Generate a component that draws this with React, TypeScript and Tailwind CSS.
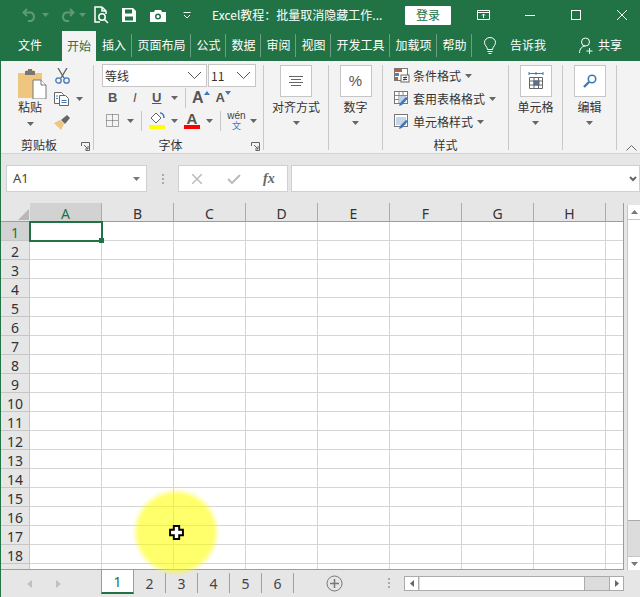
import type { ReactNode } from 'react';

const CJK = { fontFamily: '"Noto Sans CJK SC", "Noto Sans", sans-serif' };
const TABS = [
  { label: '插入', w: 'w-[36px]' },
  { label: '页面布局', w: 'w-[59px]' },
  { label: '公式', w: 'w-[35px]' },
  { label: '数据', w: 'w-[35px]' },
  { label: '审阅', w: 'w-[35px]' },
  { label: '视图', w: 'w-[35px]' },
  { label: '开发工具', w: 'w-[59px]' },
  { label: '加载项', w: 'w-[47px]' },
  { label: '帮助', w: 'w-[35px]' },
];
const COLS = ['B', 'C', 'D', 'E', 'F', 'G', 'H'];
const ROWS = Array.from({ length: 18 }, (_, i) => i + 1);

function Caret({ className = '' }: { className?: string }) {
  return (
    <svg width="7" height="4" viewBox="0 0 7 4" className={className}>
      <path d="M0 0h7L3.5 4z" fill="currentColor" />
    </svg>
  );
}

function Chevron() {
  return (
    <svg width="15" height="9" viewBox="0 0 15 9" fill="none" stroke="#555" strokeWidth="1">
      <path d="M1 1l6.5 6.5L14 1" />
    </svg>
  );
}

function GroupLabel({ children, launcher }: { children: ReactNode; launcher?: boolean }) {
  return (
    <div className={`relative h-[17px] pt-[2px] -mb-[2px] mt-auto flex items-center justify-center text-[12px] text-[#333] ${launcher ? 'pr-[16px]' : ''}`}>
      {children}
      {launcher && (
        <svg width="9" height="9" viewBox="0 0 9 9" fill="none" stroke="#666" className="absolute right-[3px] top-[7px]">
          <path d="M.5 4V.5h8v8H4.5M3 3l4 4M7 4v3H4" />
        </svg>
      )}
    </div>
  );
}

function BigButton({ label, icon, w }: { label: string; icon: ReactNode; w: string }) {
  return (
    <div className={`${w} flex flex-col h-[85px] border-r border-[#c8c8c8]`}>
      <div className="flex flex-col items-center">
        <div className="w-[32px] h-[32px] bg-white border border-[#c6c6c6] flex items-center justify-center">{icon}</div>
        <div className="text-[12px] leading-[16px] mt-[2px] text-[#333] whitespace-nowrap">{label}</div>
        <Caret className="mt-[6px] text-[#666]" />
      </div>
    </div>
  );
}

function StyleRow({ label, icon }: { label: string; icon: ReactNode }) {
  return (
    <div className="h-[23px] flex items-center pl-[11px] text-[12px] text-[#333]">
      <span className="w-[16px] h-[16px] mr-[3px]">{icon}</span>
      <span className="whitespace-nowrap">{label}</span>
      <Caret className="ml-[4px] text-[#666]" />
    </div>
  );
}

function TableIcon({ kind }: { kind: 'cond' | 'table' | 'cell' }) {
  return (
    <svg width="16" height="16" viewBox="0 0 16 16" fill="none">
      <rect x=".5" y=".5" width="13" height="12" fill="#fff" stroke="#777" />
      {kind === 'cond' && (
        <>
          <rect x="1" y="1" width="7" height="3" fill="#d2552f" />
          <rect x="1" y="5" width="4" height="3" fill="#4d82b8" />
          <rect x="1" y="9" width="3" height="3" fill="#d2552f" />
          <rect x="7" y="7" width="8" height="7" fill="#fff" stroke="#666" />
          <path d="M9 9.5h4M9 11.5h4M12 8.5l-2 4" stroke="#444" />
        </>
      )}
      {kind === 'table' && (
        <>
          <path d="M1 4.5h12M1 8.5h12M5 1v11M9 1v11" stroke="#888" />
          <rect x="5" y="5" width="7" height="6" fill="#bcd0e4" />
          <path d="M5 15l3-1 6-7-2-1-6 6z" fill="#3f78b5" />
        </>
      )}
      {kind === 'cell' && (
        <>
          <rect x="2" y="3" width="10" height="8" fill="#c4d6e8" />
          <path d="M5 15l3-1 6-7-2-1-6 6z" fill="#3f78b5" />
        </>
      )}
    </svg>
  );
}

export default function App() {
  return (
    <div className="relative w-[640px] h-[597px] overflow-hidden bg-[#e6e6e6] select-none" style={CJK}>
      {/* title bar */}
      <div className="h-[30px] bg-[#217346] flex items-center text-white">
        <svg width="16" height="14" viewBox="0 0 16 14" fill="none" stroke="#5d9a78" strokeWidth="2" className="ml-[22px]">
          <path d="M5 1L1.5 4.5 5 8M2 4.5h7a4.5 4.5 0 0 1 0 8.5H6" />
        </svg>
        <Caret className="ml-[4px] text-[#5d9a78]" />
        <svg width="16" height="14" viewBox="0 0 16 14" fill="none" stroke="#5d9a78" strokeWidth="2" className="ml-[10px]">
          <path d="M11 1l3.5 3.5L11 8M14 4.5H7a4.5 4.5 0 0 0 0 8.5h3" />
        </svg>
        <Caret className="ml-[4px] text-[#5d9a78]" />
        <svg width="15" height="18" viewBox="0 0 15 18" fill="none" stroke="#fff" strokeWidth="1.5" className="ml-[8px]">
          <path d="M8 1H1v15h5M8 1l4 4v3M8 1v4h4" />
          <circle cx="8" cy="11" r="3.2" />
          <path d="M10.5 13.5L14 17" />
        </svg>
        <svg width="14" height="14" viewBox="0 0 14 14" className="ml-[13px]">
          <path d="M0 0h11l3 3v11H0z" fill="#fff" />
          <rect x="3" y="1.5" width="7" height="4" fill="#217346" />
          <rect x="3" y="8.5" width="8" height="4" fill="#217346" />
        </svg>
        <svg width="16" height="13" viewBox="0 0 16 13" className="ml-[14px]">
          <path d="M0 3h4l1-2h6l1 2h4v10H0z" fill="#fff" />
          <circle cx="8" cy="7.5" r="3" fill="#217346" />
          <circle cx="8" cy="7.5" r="1.5" fill="#fff" />
        </svg>
        <svg width="8" height="7" viewBox="0 0 8 7" fill="none" stroke="#fff" className="ml-[17px]">
          <path d="M.5 .5h7M1 3l3 3 3-3" />
        </svg>
        <div className="ml-[21px] w-[173px] text-[12px] whitespace-nowrap">Excel教程：批量取消隐藏工作...</div>
        <div className="ml-[20px] w-[46px] h-[19px] bg-white rounded-[1px] text-[#217346] text-[12px] flex items-center justify-center">登录</div>
        <svg width="13" height="10" viewBox="0 0 13 10" fill="none" stroke="#fff" className="ml-[26px]">
          <path d="M.5 .5h12v9H.5zM.5 2.5h12M6.5 8V4M5 5.5l1.5-1.5L8 5.5" />
        </svg>
        <div className="ml-[35px] w-[10px] h-px bg-white" />
        <div className="ml-[36px] w-[10px] h-[10px] border border-white" />
        <svg width="10" height="10" viewBox="0 0 10 10" stroke="#fff" className="ml-[36px]">
          <path d="M0 0l10 10M10 0L0 10" />
        </svg>
      </div>

      {/* tabs */}
      <div className="h-[31px] bg-[#217346] flex text-white text-[12px]">
        <div className="w-[62px] pl-[18px] pb-[2px] flex items-center">文件</div>
        <div className="w-[34px] h-[30px] mt-px pb-[1px] bg-[#f3f3f3] text-[#217346] flex items-center justify-center">开始</div>
        {TABS.map(({ label, w }) => (
          <div key={label} className={`${w} pb-[2px] flex items-center justify-center relative`}>
            {label}
            <span className="absolute right-0 top-[4px] w-px h-[23px] bg-[#6a9f83]" />
          </div>
        ))}
        <svg width="12" height="18" viewBox="0 0 12 18" fill="none" stroke="#fff" className="ml-[12px] mt-[7px]">
          <path d="M3.5 12.5C3 9 .5 8.5.5 5.5a5.5 5 0 0 1 11 0c0 3-2.5 3.5-3 7zM3.5 14.5h5M4.500 16.5h3" />
        </svg>
        <span className="ml-[14px] mt-[6px]">告诉我</span>
        <svg width="15" height="18" viewBox="0 0 15 18" fill="none" stroke="#fff" className="ml-[33px] mt-[7px]">
          <circle cx="6.5" cy="5" r="4" />
          <path d="M.5 16c0-4 2.5-7 6-7M10.5 11v6M7.5 14h6" />
        </svg>
        <span className="ml-[4px] mt-[6px]">共享</span>
      </div>

      {/* everything below the tabs carries the thin green edge */}
      <div className="border-l border-[#217346]">
        {/* ribbon */}
        <div className="h-[93px] pt-[4px] flex bg-[#f3f3f3] border-b border-[#d4d4d4]">
          <div className="w-[93px] h-[85px] flex flex-col border-r border-[#c8c8c8]">
            <div className="flex">
              <div className="w-[48px] pl-[10px] flex flex-col items-center">
                <svg width="29" height="30" viewBox="0 0 29 30" className="mt-[4px] ml-[4px]">
                  <path d="M0 4h8V1h8v3h8v25H0z" fill="#eec67f" />
                  <path d="M7 4V2h3V0h4v2h3v4H7z" fill="#777" />
                  <path d="M15 11h8l5 5v14H15z" fill="#fff" stroke="#777" />
                  <path d="M23 11v5h5" fill="#fff" stroke="#777" />
                </svg>
                <div className="text-[12px] leading-[16px] text-[#333]">粘贴</div>
                <Caret className="mt-[7px] text-[#666]" />
              </div>
              <div className="flex flex-col">
                <div className="h-[22px] pl-[6px] flex items-center">
                  <svg width="15" height="16" viewBox="0 0 15 16" fill="none">
                    <path d="M3 0l6 10M12 0L6 10" stroke="#666" strokeWidth="1.4" />
                    <circle cx="3.5" cy="12.5" r="2.7" stroke="#3f78b5" strokeWidth="1.3" />
                    <circle cx="11.5" cy="12.5" r="2.7" stroke="#3f78b5" strokeWidth="1.3" />
                  </svg>
                </div>
                <div className="h-[23px] pl-[5px] flex items-center">
                  <svg width="15" height="14" viewBox="0 0 15 14" fill="#fff" stroke="#666">
                    <path d="M.5 .5h7l2 2v9H.5z" />
                    <path d="M5.5 3.5h6l3 3v7h-9z" />
                    <path d="M2 4h2M2 6.5h2M7.5 8.5h5M7.5 10.5h5" stroke="#3f78b5" />
                  </svg>
                  <Caret className="ml-[7px] text-[#666]" />
                </div>
                <div className="h-[24px] pl-[5px] flex items-center">
                  <svg width="16" height="15" viewBox="0 0 16 15">
                    <path d="M0 8l6-3 4 4-3 6z" fill="#eec67f" />
                    <path d="M7 5l6-5 3 3-5 6z" fill="#666" />
                  </svg>
                </div>
              </div>
            </div>
            <GroupLabel launcher>剪贴板</GroupLabel>
          </div>

          <div className="w-[170px] h-[85px] flex flex-col border-r border-[#c8c8c8]">
            <div className="flex pl-[8px] -mt-[1px]">
              <div className="w-[105px] h-[23px] bg-white border border-[#c6c6c6] flex items-center justify-between pl-[2px] pr-[4px] text-[12px] text-[#333]">
                等线
                <Chevron />
              </div>
              <div className="w-[48px] h-[23px] ml-px bg-white border border-[#c6c6c6] flex items-center justify-between pl-[2px] pr-[4px] text-[12px] text-[#333]">
                11
                <Chevron />
              </div>
            </div>
            <div className="flex items-center h-[22px] text-[#555] font-['Liberation_Sans']">
              <span className="w-[35px] pl-[14px] text-[13px] font-bold">B</span>
              <span className="w-[23px] pl-[4px] text-[13px] italic">I</span>
              <span className="w-[17px] text-[13px] font-bold underline">U</span>
              <Caret className="ml-[2px] text-[#666]" />
              <span className="ml-[7px] w-px h-[20px] bg-[#c8c8c8]" />
              <span className="ml-[6px] text-[16px] font-bold">A</span>
              <svg width="6" height="4" className="mb-[11px] text-[#3f78b5]" viewBox="0 0 6 4"><path d="M3 0l3 4H0z" fill="currentColor" /></svg>
              <span className="ml-[6px] text-[13px] font-bold">A</span>
              <svg width="6" height="4" className="mb-[11px] text-[#3f78b5]" viewBox="0 0 6 4"><path d="M3 4l3-4H0z" fill="currentColor" /></svg>
            </div>
            <div className="flex items-center h-[23px]">
              <svg width="13" height="13" viewBox="0 0 13 13" fill="none" stroke="#555" strokeDasharray="1 1" className="ml-[12px]">
                <path d="M.5 .5h12v12H.5zM.5 6.5h12M6.5 .5v12" />
              </svg>
              <Caret className="ml-[8px] text-[#666]" />
              <span className="ml-[7px] w-px h-[20px] bg-[#c8c8c8]" />
              <div className="ml-[7px] w-[16px] flex flex-col items-center">
                <svg width="16" height="13" viewBox="0 0 16 13" fill="#fff" stroke="#666">
                  <path d="M2 6l5-5 5 5-5 5z" />
                  <path d="M11 1c3 0 4 3 4 5" stroke="#3f78b5" strokeWidth="1.5" fill="none" />
                </svg>
                <span className="w-[16px] h-[4px] bg-[#ffff00]" />
              </div>
              <Caret className="ml-[6px] text-[#666]" />
              <div className="ml-[6px] w-[16px] flex flex-col items-center">
                <span className="h-[13px] leading-[13px] text-[15px] font-bold text-[#555] font-['Liberation_Sans']">A</span>
                <span className="w-[16px] h-[4px] bg-[#ff0000]" />
              </div>
              <Caret className="ml-[6px] text-[#666]" />
              <span className="ml-[7px] w-px h-[20px] bg-[#c8c8c8]" />
              <div className="ml-[7px] w-[17px] flex flex-col items-center">
                <span className="h-[10px] leading-[10px] text-[10px] text-[#444] font-['Liberation_Sans']">wén</span>
                <span className="h-[9px] leading-[9px] text-[9px] text-[#3f78b5]">文</span>
              </div>
              <Caret className="ml-[5px] text-[#666]" />
            </div>
            <GroupLabel launcher>字体</GroupLabel>
          </div>

          <BigButton
            w="w-[65px]"
            label="对齐方式"
            icon={
              <svg width="14" height="10" viewBox="0 0 14 10" stroke="#666">
                <path d="M0 .5h14M2 3.5h10M0 6.5h14M2 9.5h10" />
              </svg>
            }
          />
          <BigButton w="w-[54px]" label="数字" icon={<span className="text-[15px] text-[#555] font-['Liberation_Sans']">%</span>} />

          <div className="w-[126px] h-[85px] flex flex-col border-r border-[#c8c8c8]">
            <div className="-mt-[1px]">
              <StyleRow label="条件格式" icon={<TableIcon kind="cond" />} />
              <StyleRow label="套用表格格式" icon={<TableIcon kind="table" />} />
              <StyleRow label="单元格样式" icon={<TableIcon kind="cell" />} />
            </div>
            <GroupLabel>样式</GroupLabel>
          </div>

          <BigButton
            w="w-[54px]"
            label="单元格"
            icon={
              <svg width="16" height="18" viewBox="0 0 16 18" fill="none" stroke="#666">
                <path d="M1 1.5h14M1 0v3M8 0v3M15 0v3" stroke="#3f78b5" />
                <path d="M1.5 5.5h13v11h-13zM1.5 9h13M1.5 13h13M6 5.5v11M10.5 5.5v11" />
                <rect x="6" y="9" width="5" height="4" fill="#3f78b5" />
              </svg>
            }
          />
          <BigButton
            w="w-[54px]"
            label="编辑"
            icon={
              <svg width="14" height="14" viewBox="0 0 14 14" fill="none" stroke="#3f78b5" strokeWidth="1.6">
                <circle cx="9" cy="5" r="3.7" />
                <path d="M6 8l-5 5" strokeWidth="2.4" />
              </svg>
            }
          />
          <div className="flex-1 flex items-end justify-end pr-[3px] pb-[2px]">
            <svg width="11" height="6" viewBox="0 0 11 6" fill="none" stroke="#666">
              <path d="M.5 5.5l5-5 5 5" />
            </svg>
          </div>
        </div>

        {/* formula bar */}
        <div className="h-[49px] pt-[11px] pl-[5px] flex">
          <div className="w-[141px] h-[27px] bg-white border border-[#d0d0d0] flex items-center justify-between pl-[6px] pr-[6px] text-[13px] text-[#444] font-['Noto_Sans']">
            A1
            <Caret className="text-[#777]" />
          </div>
          <div className="w-[31px] h-[27px] flex flex-col items-center justify-center gap-[2px]">
            <span className="w-[2px] h-[2px] bg-[#aaa]" />
            <span className="w-[2px] h-[2px] bg-[#aaa]" />
            <span className="w-[2px] h-[2px] bg-[#aaa]" />
          </div>
          <div className="w-[110px] h-[27px] bg-white border border-[#d0d0d0] flex items-center">
            <svg width="10" height="10" viewBox="0 0 10 10" stroke="#bbb" strokeWidth="1.5" className="ml-[13px]">
              <path d="M0 0l10 10M10 0L0 10" />
            </svg>
            <svg width="14" height="10" viewBox="0 0 14 10" fill="none" stroke="#bbb" strokeWidth="2" className="ml-[25px]">
              <path d="M1 5l4 4 8-8" />
            </svg>
            <span className="ml-[22px] text-[14px] italic font-bold text-[#666] font-['Liberation_Serif']">fx</span>
          </div>
          <div className="ml-[3px] flex-1 h-[27px] bg-white border border-[#d0d0d0] flex items-center justify-end pr-[2px]">
            <svg width="8" height="6" viewBox="0 0 8 6" fill="none" stroke="#666" strokeWidth="2">
              <path d="M1 1l3 3 3-3" />
            </svg>
          </div>
        </div>

        {/* sheet grid with vertical scrollbar */}
        <div className="flex h-[367px]">
          <div className="w-[623px] border-r border-b border-[#9c9c9c] overflow-hidden font-['Noto_Sans'] text-[#333]">
            <div className="flex h-[19px] border-b border-[#9c9c9c] text-[14px] leading-[21px]">
              <div className="w-[29px] flex items-end justify-end pr-[1px] pb-[1px]">
                <svg width="11" height="11" viewBox="0 0 11 11"><path d="M11 0v11H0z" fill="#b8b8b8" /></svg>
              </div>
              <div className="w-[72px] text-center bg-[#d2d2d2] text-[#217346] border-r border-[#ababab]">A</div>
              {COLS.map((c) => (
                <div key={c} className="w-[72px] text-center border-r border-[#ababab]">{c}</div>
              ))}
            </div>
            {ROWS.map((r) => (
              <div key={r} className="flex h-[19px]">
                <div className={`w-[29px] border-r border-b border-[#c6c6c6] text-[14px] leading-[21px] text-center ${r === 1 ? 'bg-[#d2d2d2] text-[#217346]' : ''}`}>{r}</div>
                {Array.from({ length: 8 }, (_, c) => (
                  <div key={c} className="w-[72px] shrink-0 bg-white border-r border-b border-[#d4d4d4]" />
                ))}
                <div className="flex-1 bg-white border-b border-[#d4d4d4]" />
              </div>
            ))}
            <div className="flex h-[5px]">
              <div className="w-[29px] border-r border-[#c6c6c6]" />
              {Array.from({ length: 8 }, (_, c) => (
                <div key={c} className="w-[72px] shrink-0 bg-white border-r border-[#d4d4d4]" />
              ))}
              <div className="flex-1 bg-white" />
            </div>
          </div>
          <div className="ml-[3px] mt-[2px] w-[13px] flex flex-col border-l border-[#c6c6c6]">
            <div className="h-[15px] bg-white border-b border-[#c6c6c6] flex items-center justify-center text-[#777]">
              <svg width="7" height="4" viewBox="0 0 7 4"><path d="M3.5 0L7 4H0z" fill="currentColor" /></svg>
            </div>
            <div className="h-[301px] bg-white border-b border-[#ababab]" />
            <div className="flex-1 bg-[#dcdcdc]" />
            <div className="h-[14px] bg-white border-t border-[#c6c6c6] flex items-center justify-center">
              <Caret className="text-[#777]" />
            </div>
          </div>
        </div>

        {/* sheet tabs */}
        <div className="h-[27px] flex text-[14px] text-[#444] font-['Noto_Sans']">
          <div className="w-[100px] flex items-center pl-[26px] gap-[24px] text-[#c0c0c0]">
            <svg width="5" height="8" viewBox="0 0 5 8"><path d="M5 0v8L0 4z" fill="currentColor" /></svg>
            <svg width="5" height="8" viewBox="0 0 5 8"><path d="M0 0v8l5-4z" fill="currentColor" /></svg>
          </div>
          <div className="w-[33px] h-[24px] bg-white border-x border-x-[#9c9c9c] border-b-2 border-b-[#217346] text-[#217346] flex items-center justify-center">1</div>
          {[2, 3, 4, 5, 6].map((n) => (
            <div key={n} className="w-[32px] h-[20px] mt-[3px] flex items-center justify-center border-r border-[#a0a0a0]">{n}</div>
          ))}
          <svg width="17" height="17" viewBox="0 0 17 17" fill="none" stroke="#777" className="ml-[32px] mt-[5px]">
            <circle cx="8.5" cy="8.5" r="7.5" />
            <path d="M8.5 4v9M4 8.5h9" strokeWidth="1.5" />
          </svg>
          <div className="ml-[45px] mt-[8px] flex flex-col gap-[2px]">
            <span className="w-[2px] h-[2px] bg-[#aaa]" />
            <span className="w-[2px] h-[2px] bg-[#aaa]" />
            <span className="w-[2px] h-[2px] bg-[#aaa]" />
          </div>
          <div className="ml-[14px] mt-[6px] w-[220px] h-[15px] flex border border-[#ababab] bg-[#dcdcdc]">
            <div className="w-[14px] bg-white border-r border-[#ababab] flex items-center justify-center text-[#666]">
              <svg width="4" height="7" viewBox="0 0 4 7"><path d="M4 0v7L0 3.5z" fill="currentColor" /></svg>
            </div>
            <div className="w-[165px] ml-px bg-white border-r border-[#ababab]" />
            <div className="ml-auto w-[14px] bg-white border-l border-[#ababab] flex items-center justify-center text-[#666]">
              <svg width="4" height="7" viewBox="0 0 4 7"><path d="M0 0v7l4-3.5z" fill="currentColor" /></svg>
            </div>
          </div>
        </div>
      </div>

      {/* selected cell A1 */}
      <div className="absolute left-[29px] top-[221px] w-[74px] h-[21px] border-2 border-[#217346]">
        <span className="absolute -right-[3px] -bottom-[3px] w-[5px] h-[5px] bg-[#217346]" />
      </div>

      {/* mouse highlight and cursor */}
      <div className="absolute left-[132px] top-[488px] w-[88px] h-[88px] bg-[radial-gradient(circle_closest-side,rgba(255,255,0,0.58)_84%,rgba(255,255,0,0)_100%)]" />
      <svg width="15" height="15" viewBox="0 0 14 14" className="absolute left-[169px] top-[525px]">
        <path d="M4.5 1h5v3.5H13v5H9.5V13h-5V9.5H1v-5h3.5z" fill="#fff" stroke="#000" strokeWidth="1.8" />
      </svg>
    </div>
  );
}
